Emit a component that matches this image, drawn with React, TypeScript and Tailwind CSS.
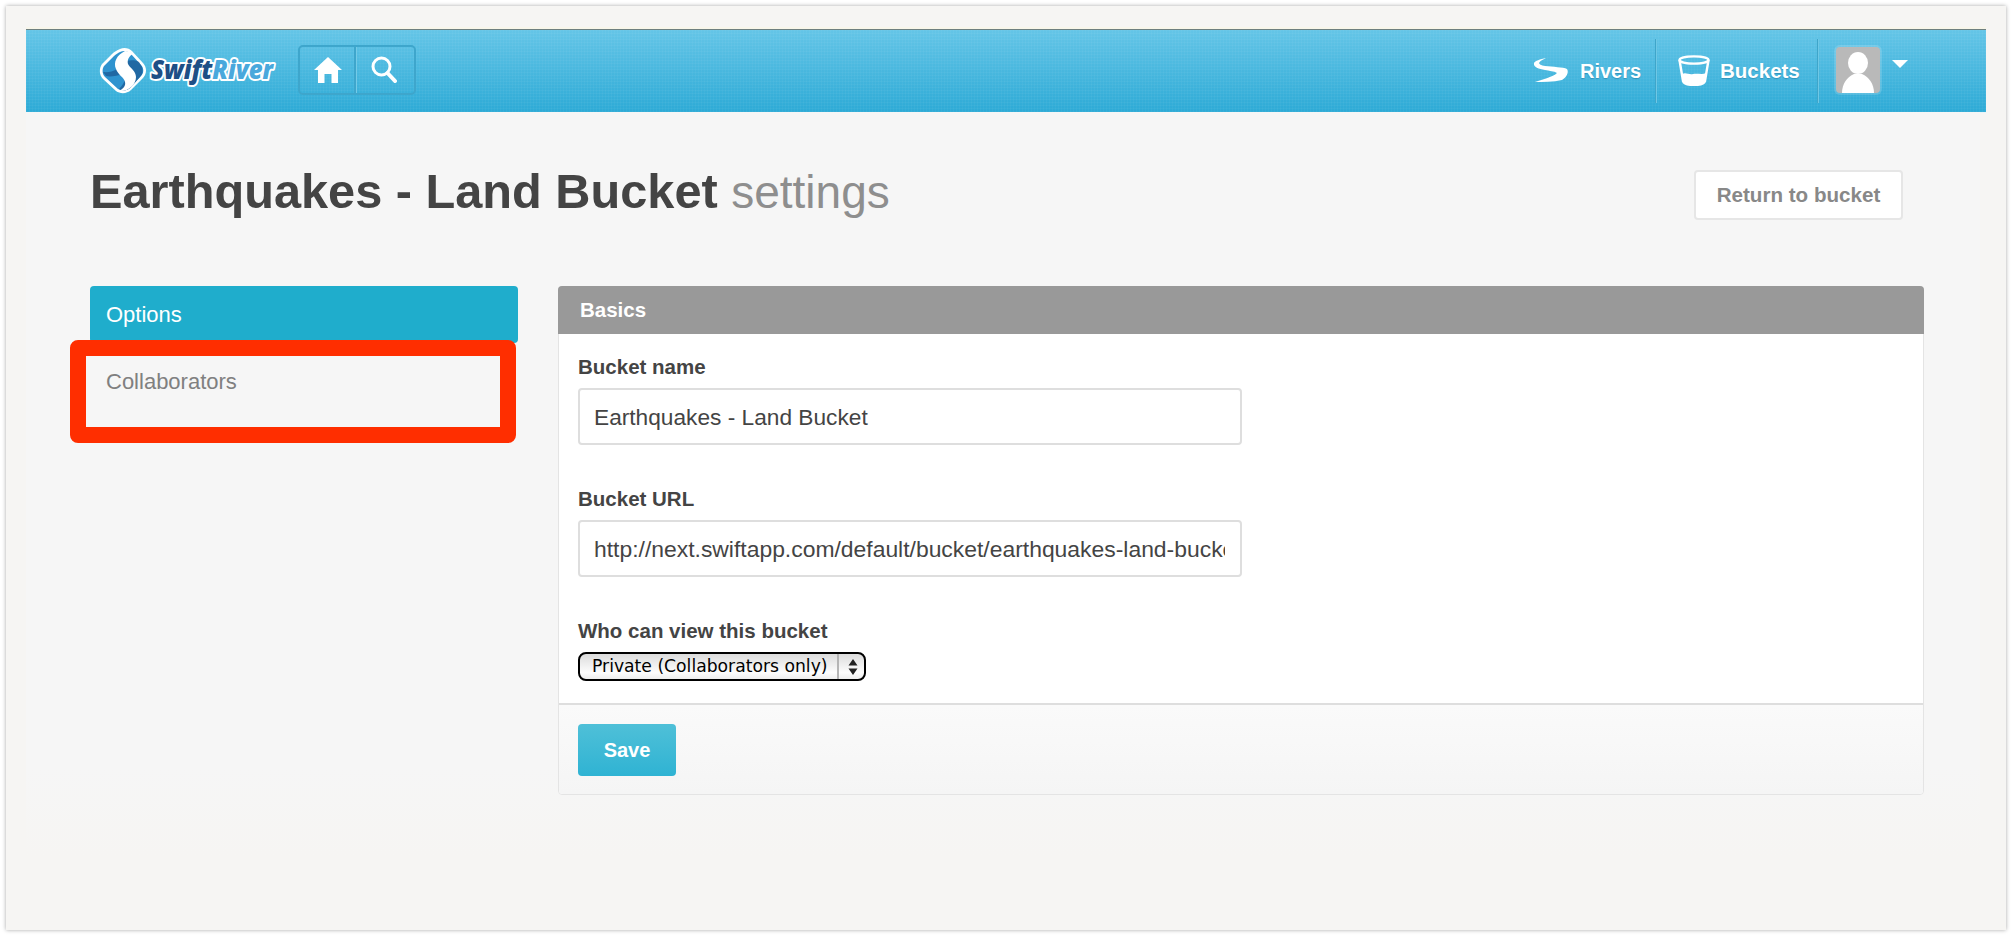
const inputClass =
  "w-[664px] h-[57px] pl-[14px] pr-[15px] pt-[2px] bg-white border-2 border-[#dedede] rounded-[4px] text-[#444] outline-none block";
const labelClass = "block h-[24px] leading-[24px] font-bold text-[20.5px] text-[#444]";

function Logo() {
  return (
    <svg width="180" height="50" viewBox="0 0 180 50" className="block">
      <g transform="translate(0,1)">
        <path d="M22 2 C26 0 31 1 34 4 L45 16 C49 20 49 27 45 31 L33 43 C29 47 22 47 18 44 L5 32 C1 28 1 21 4 17 L14 7 C16 5 19 3 22 2 Z" fill="#fff" />
        <path d="M22 5 C26 3 30 4 33 7 L43 18 C46 21 46 26 43 29 L32 41 C29 44 23 44 20 42 L7 30 C4 27 4 22 6 19 L16 9 C18 7 20 6 22 5 Z" fill="#2f93cf" />
        <path d="M5 25 C14 26 22 22 28 14 C33 13 38 13 41 15 L44 20 C45 24 45 27 42 30 L32 41 C29 44 24 44 21 42 C27 36 29 29 25 27 C19 29 12 30 8 29 Z" fill="#1e5a94" opacity="0.75" />
        <path d="M27 4 C19 8 15 15 18 22 C20 28 26 30 27 35 C28 39 25 42 21 44 C30 45 38 38 38 30 C38 24 32 21 30 17 C29 13 31 9 35 7 C33 5 30 4 27 4 Z" fill="#fff" />
      </g>
      <text
        x="53"
        y="33"
        fontFamily="'Open Sans', sans-serif"
        fontWeight="800"
        fontStyle="italic"
        fontSize="26"
        textLength="122"
        lengthAdjust="spacingAndGlyphs"
        stroke="#fff"
        strokeWidth="4"
        strokeLinejoin="round"
        paintOrder="stroke"
      >
        <tspan fill="#1d4f86">Swift</tspan>
        <tspan fill="#49a8dc">River</tspan>
      </text>
    </svg>
  );
}

function HomeIcon() {
  return (
    <svg width="28" height="26" viewBox="0 0 28 26" className="block">
      <path d="M14 0 L28 13 L24 13 L24 26 L17.5 26 L17.5 17 L10.5 17 L10.5 26 L4 26 L4 13 L0 13 Z" fill="#fff" />
    </svg>
  );
}

function SearchIcon() {
  return (
    <svg width="26" height="27" viewBox="0 0 26 27" className="block" fill="none" stroke="#fff">
      <circle cx="10.5" cy="10.5" r="8.5" strokeWidth="3" />
      <path d="M16.5 17 L24 25" strokeWidth="4" strokeLinecap="round" />
    </svg>
  );
}

function RiverIcon() {
  return (
    <svg width="36" height="25" viewBox="0 0 36 25" className="block">
      <path d="M13 0 C7 1 2 3 1 5 C0 9 6 11 12 12 C16 13 21 13 24 15 C20 19 10 21 2 24 C10 24 20 24 29 22 C34 19 36 14 34 11 C30 9 20 9 12 8 C8 7.5 6 6 6 5 C7 3 10 1.5 13 0 Z" fill="#fff" />
    </svg>
  );
}

function BucketIcon() {
  return (
    <svg width="32" height="31" viewBox="0 0 32 31" className="block">
      <ellipse cx="16" cy="5" rx="14.5" ry="3.6" fill="none" stroke="#fff" strokeWidth="2.4" />
      <path d="M1.5 5 L5 26 C6 29 11 30 16 30 C21 30 26 29 27 26 L30.5 5" fill="none" stroke="#fff" strokeWidth="2.4" />
      <path d="M4 19 C8 17 11 20 15 19 C20 18 24 20 28 18 L26.5 26 C25 29 21 30 16 30 C11 30 7 29 5.5 26 Z" fill="#fff" />
    </svg>
  );
}

function Avatar() {
  return (
    <div className="w-[44px] h-[46px] rounded-[4px] bg-[#b9b9b9] shadow-[0_0_0_2px_rgba(255,255,255,0.15)] overflow-hidden">
      <svg width="44" height="46" viewBox="0 0 44 46" className="block">
        <ellipse cx="22" cy="16" rx="10" ry="11" fill="#fff" />
        <path d="M6 46 C6 37 11 30 18 27 L26 27 C33 30 38 37 38 46 Z" fill="#fff" />
      </svg>
    </div>
  );
}

function HeaderDivider() {
  return <div className="w-[2px] h-[64px] bg-[#3fa5c9] border-r border-[#6ec8e6]" />;
}

export default function App() {
  return (
    <div className="w-[2012px] h-[935px] bg-white pt-[6px] pl-[6px] font-['Liberation_Sans',Arial,sans-serif]">
      <div className="w-[2000px] h-[924px] bg-[#f6f5f3] shadow-[0_0_4px_rgba(0,0,0,0.35)] pt-[23px] pl-[20px]">
        <header className="w-[1960px] h-[83px] flex items-center justify-between border-t border-[#6d7f7f] shadow-[0_-2px_0_#f8f6ea,0_1px_0_#e9f4f8] bg-[image:repeating-linear-gradient(0deg,rgba(255,255,255,0.035)_0_1px,transparent_1px_3px),repeating-linear-gradient(90deg,rgba(255,255,255,0.035)_0_1px,transparent_1px_3px),linear-gradient(#64c5e7,#2daad6)]">
          <div className="flex items-center pl-[72px]">
            <Logo />
            <div className="ml-[20px] mt-[-2px] flex w-[118px] h-[50px] rounded-[5px] border-2 border-[#3ea6cc]">
              <div className="w-[56px] flex items-center justify-center border-r-2 border-[#3ea6cc] pl-[1px]">
                <HomeIcon />
              </div>
              <div className="w-[58px] border-l border-[#74cbe8] flex items-center justify-center pb-[2px] pr-[4px]">
                <SearchIcon />
              </div>
            </div>
          </div>
          <div className="flex items-center pr-[78px] mt-[-1px] text-white font-bold text-[20.5px] [text-shadow:0_1px_1px_rgba(0,80,120,0.35)]">
            <RiverIcon />
            <span className="ml-[11px] w-[62px] text-[20px]">Rivers</span>
            <div className="ml-[13px] mr-[21px]">
              <HeaderDivider />
            </div>
            <BucketIcon />
            <span className="ml-[10px] w-[83px] pt-[1px]">Buckets</span>
            <div className="ml-[14px] mr-[17px]">
              <HeaderDivider />
            </div>
            <div className="mt-[-1px]">
              <Avatar />
            </div>
            <svg width="16" height="8" viewBox="0 0 16 8" className="ml-[12px] mb-[14px] block">
              <path d="M0 0 L16 0 L8 8 Z" fill="#fff" />
            </svg>
          </div>
        </header>

        <main className="w-[1954px] h-[745px] pl-[64px] pr-[56px] bg-[linear-gradient(#f6f6f6_88%,#f6f5f3)]">
          <div className="flex justify-between items-start pt-[58px] h-[174px]">
            <h1 className="mt-[-3px] font-bold text-[48.7px] leading-[48px] text-[#444]">
              Earthquakes - Land Bucket{" "}
              <span className="font-normal text-[#8e8e8e] text-[46px]">settings</span>
            </h1>
            <button className="mr-[21px] w-[209px] h-[50px] bg-white border-2 border-[#e6e6e6] rounded-[4px] font-bold text-[20.6px] text-[#888]">
              Return to bucket
            </button>
          </div>

          <div className="flex gap-[40px] items-start">
            <nav className="relative w-[428px] shrink-0">
              <div className="h-[57px] pl-[16px] flex items-center bg-[#1fadcc] rounded-[4px] text-white text-[22px]">
                Options
              </div>
              <div className="pl-[16px] pt-[26px] text-[22px] leading-[26px] text-[#808080]">Collaborators</div>
              <div className="absolute left-[-20px] top-[54px] w-[446px] h-[103px] border-[16px] border-[#ff2e00] rounded-[8px]" />
            </nav>

            <section className="w-[1366px] border border-[#e4e4e4] rounded-[4px] bg-white">
              <div className="h-[48px] mt-[-1px] mx-[-1px] rounded-t-[4px] bg-[#999] pl-[22px] pt-[11px] font-bold text-[20.5px] leading-[26px] text-white">
                Basics
              </div>
              <div className="px-[19px] pt-[21px] pb-[22px]">
                <label className={labelClass}>Bucket name</label>
                <input readOnly value="Earthquakes - Land Bucket" className={inputClass + " mt-[9px] text-[22.7px]"} />
                <label className={labelClass + " mt-[42px]"}>Bucket URL</label>
                <input
                  readOnly
                  value="http://next.swiftapp.com/default/bucket/earthquakes-land-bucket"
                  className={inputClass + " mt-[9px] text-[22.9px]"}
                />
                <label className={labelClass + " mt-[42px]"}>Who can view this bucket</label>
                <div className="mt-[9px] w-[288px] h-[29px] flex items-center border-2 border-black rounded-[8px] bg-[linear-gradient(#dcdcdc,#fdfdfd_75%,#eeeeee)] font-['DejaVu_Sans',sans-serif] text-[17.2px] text-black">
                  <span className="pl-[12px] w-[257px] whitespace-nowrap">Private (Collaborators only)</span>
                  <div className="w-[2px] h-full bg-[#b5b5b5]" />
                  <svg width="10" height="16" viewBox="0 0 10 16" className="ml-[9px] block">
                    <path d="M5 0 L9.5 6.5 L0.5 6.5 Z M5 16 L9.5 9.5 L0.5 9.5 Z" fill="#222" />
                  </svg>
                </div>
              </div>
              <div className="h-[91px] border-t-2 border-[#dedede] bg-[linear-gradient(#fafafa,#f5f5f5)] px-[19px] pt-[19px] rounded-b-[4px]">
                <button className="w-[98px] h-[52px] rounded-[4px] bg-[linear-gradient(#4fc0d8,#2fb3d3)] font-bold text-[20px] text-white">
                  Save
                </button>
              </div>
            </section>
          </div>
        </main>
      </div>
    </div>
  );
}
